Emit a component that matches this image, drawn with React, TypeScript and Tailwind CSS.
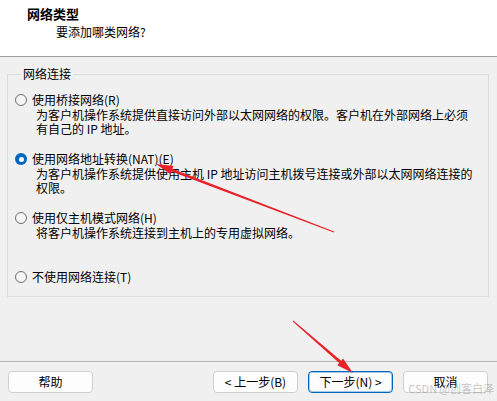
import React from "react";

type Option = {
  label: string;
  lines: string[];
  checked?: boolean;
};

const OPTIONS: Option[] = [
  {
    label: "使用桥接网络(R)",
    lines: [
      "为客户机操作系统提供直接访问外部以太网网络的权限。客户机在外部网络上必须",
      "有自己的 IP 地址。",
    ],
  },
  {
    label: "使用网络地址转换(NAT)(E)",
    lines: [
      "为客户机操作系统提供使用主机 IP 地址访问主机拨号连接或外部以太网网络连接的",
      "权限。",
    ],
    checked: true,
  },
  {
    label: "使用仅主机模式网络(H)",
    lines: ["将客户机操作系统连接到主机上的专用虚拟网络。"],
  },
  { label: "不使用网络连接(T)", lines: [] },
];

function Radio({ checked }: { checked?: boolean }) {
  if (checked) {
    return (
      <span className="flex h-[12px] w-[12px] shrink-0 items-center justify-center rounded-full bg-[#0067c0]">
        <span className="h-[5px] w-[5px] rounded-full bg-white" />
      </span>
    );
  }
  return <span className="h-[12px] w-[12px] shrink-0 rounded-full border border-[#6e6e6e] bg-[#f5f5f5]" />;
}

// tapered red annotation arrow, tip at (x2, y2)
function arrowPoints(x1: number, y1: number, x2: number, y2: number) {
  const headLen = 17;
  const headW = 4.5;
  const tailW = 0.5;
  const neckW = 1.4;
  const dx = x2 - x1;
  const dy = y2 - y1;
  const len = Math.hypot(dx, dy);
  const ux = dx / len;
  const uy = dy / len;
  const nx = -uy;
  const ny = ux;
  const bx = x2 - ux * headLen;
  const by = y2 - uy * headLen;
  const pts = [
    [x1 + nx * tailW, y1 + ny * tailW],
    [bx + nx * neckW, by + ny * neckW],
    [bx + nx * headW, by + ny * headW],
    [x2, y2],
    [bx - nx * headW, by - ny * headW],
    [bx - nx * neckW, by - ny * neckW],
    [x1 - nx * tailW, y1 - ny * tailW],
  ];
  return pts.map((p) => `${p[0].toFixed(1)},${p[1].toFixed(1)}`).join(" ");
}

function Button({ children, primary }: { children: React.ReactNode; primary?: boolean }) {
  return (
    <button
      className={
        primary
          ? "h-[22px] w-[85px] rounded-[4px] border border-[#0067c0] bg-[#fdfdfd] text-[12px] leading-[20px] text-black shadow-[inset_0_0_0_1px_rgba(0,103,192,0.35)]"
          : "h-[22px] w-[85px] rounded-[4px] border border-[#d0d0d0] bg-[#fdfdfd] text-[12px] leading-[20px] text-black"
      }
    >
      {children}
    </button>
  );
}

export default function App() {
  return (
    <div className="relative flex h-[401px] w-[497px] flex-col overflow-hidden bg-[#f0f0f0] font-['Noto_Sans_CJK_SC','Noto_Sans',sans-serif] text-black">
      {/* Header */}
      <div className="h-[57px] shrink-0 border-b border-[#a0a0a0] bg-white pt-[6px]">
        <div className="pl-[27px] text-[13px] font-bold leading-[16px]">网络类型</div>
        <div className="mt-[2px] pl-[56px] text-[12px] leading-[16px]">要添加哪类网络?</div>
      </div>

      {/* Body */}
      <div className="flex-1">
        <fieldset className="ml-[7px] mt-[9px] h-[231px] w-[482px] border border-[#dcdcdc] pl-[7px] pt-[10px]">
          <legend className="ml-[6px] px-[2px] text-[12px] leading-[16px]">网络连接</legend>
          <div className="flex flex-col gap-[15px]">
            {OPTIONS.map((opt) => (
              <div key={opt.label} className="flex flex-col">
                <div className="flex h-[16px] items-center gap-[5px]">
                  <Radio checked={opt.checked} />
                  <span className="whitespace-nowrap text-[12px] leading-[16px]">{opt.label}</span>
                </div>
                {opt.lines.length > 0 && (
                  <div className="h-[28px] pl-[21px] text-[12px] leading-[14px]">
                    {opt.lines.map((l) => (
                      <div key={l} className="whitespace-nowrap">
                        {l}
                      </div>
                    ))}
                  </div>
                )}
              </div>
            ))}
          </div>
        </fieldset>
      </div>

      {/* Footer */}
      <div className="flex h-[40px] shrink-0 items-start border-t border-[#b4b4b4] pl-[8px] pr-[9px] pt-[9px]">
        <Button>帮助</Button>
        <div className="ml-auto flex gap-[10px]">
          <Button>&lt; 上一步(B)</Button>
          <Button primary>下一步(N) &gt;</Button>
          <Button>取消</Button>
        </div>
      </div>

      {/* annotations */}
      <svg className="pointer-events-none absolute left-0 top-0" width="497" height="401" viewBox="0 0 497 401">
        <polygon points={arrowPoints(334, 232, 156, 164)} fill="#e8222b" />
        <polygon points={arrowPoints(293, 321, 353, 373)} fill="#e8222b" />
      </svg>
      <div className="pointer-events-none absolute right-[3px] top-[382px] whitespace-nowrap text-[11px] leading-[13px] text-[rgba(150,150,150,0.55)]">
        CSDN @创客白泽
      </div>
    </div>
  );
}
